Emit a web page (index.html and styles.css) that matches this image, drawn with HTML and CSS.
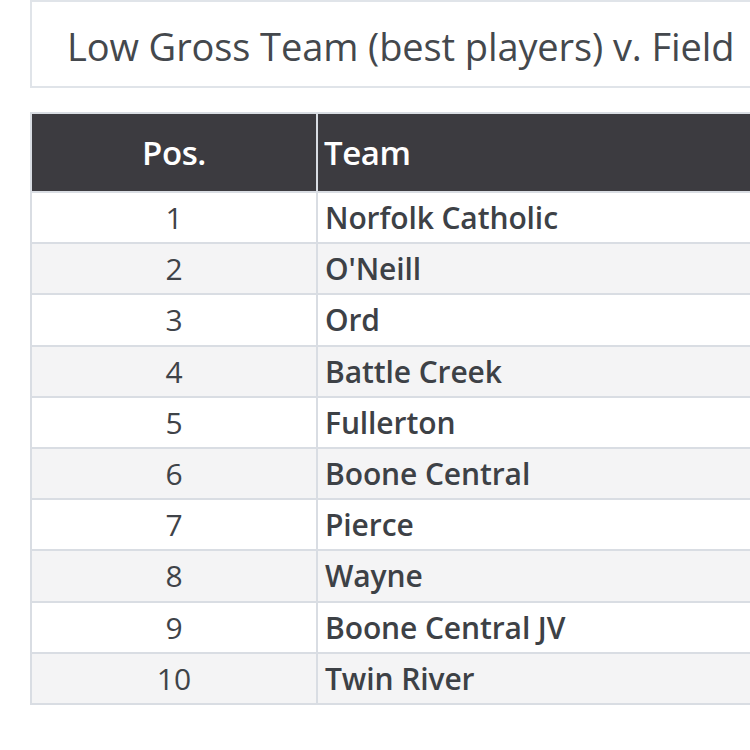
FILE: index.html
```html
<!DOCTYPE html>
<html lang="en">
<head>
<meta charset="utf-8">
<title>Low Gross Team</title>
<link rel="stylesheet" href="styles.css">
</head>
<body>
<div class="page">
  <div class="title-box">
    <h1 class="title">Low Gross Team (best players) v. Field</h1>
  </div>
  <table class="results">
    <thead>
      <tr><th class="pos">Pos.</th><th class="team">Team</th></tr>
    </thead>
    <tbody>
      <tr><td class="pos">1</td><td class="team">Norfolk Catholic</td></tr>
      <tr><td class="pos">2</td><td class="team">O'Neill</td></tr>
      <tr><td class="pos">3</td><td class="team">Ord</td></tr>
      <tr><td class="pos">4</td><td class="team">Battle Creek</td></tr>
      <tr><td class="pos">5</td><td class="team">Fullerton</td></tr>
      <tr><td class="pos">6</td><td class="team">Boone Central</td></tr>
      <tr><td class="pos">7</td><td class="team">Pierce</td></tr>
      <tr><td class="pos">8</td><td class="team">Wayne</td></tr>
      <tr><td class="pos">9</td><td class="team">Boone Central JV</td></tr>
      <tr><td class="pos">10</td><td class="team">Twin River</td></tr>
    </tbody>
  </table>
</div>
</body>
</html>
```
FILE: styles.css
```css
html, body {
  margin: 0;
  padding: 0;
  background: #ffffff;
  overflow: hidden;
}
.page {
  width: 900px;
  padding-left: 30px;
  font-family: "Open Sans", "Noto Sans", sans-serif;
  color: #3d4146;
}
.title-box {
  box-sizing: border-box;
  height: 88px;
  border: 2px solid #e0e4e9;
  display: flex;
  align-items: center;
  padding-left: 35px;
  padding-top: 4px;
}
.title {
  margin: 0;
  font-size: 38px;
  font-weight: 400;
  color: #44484d;
  white-space: nowrap;
  letter-spacing: -0.1px;
}
.results {
  margin-top: 24px;
  width: 870px;
  border-collapse: collapse;
  border: 2px solid #d9dde3;
}
.results th,
.results td {
  border: 2px solid #d9dde3;
  padding: 0;
  white-space: nowrap;
}
.results th {
  background: #3c3b40;
  color: #ffffff;
  height: 77px;
  font-size: 33px;
  font-weight: 600;
  letter-spacing: -0.4px;
}
.results th.pos { width: 284px; text-align: center; }
.results th.team { text-align: left; padding-left: 6px; }
.results td {
  height: 49.2px;
  font-size: 30px;
}
.results tbody tr:nth-child(even) td { background: #f4f4f5; }
.results td.pos { text-align: center; font-weight: 400; color: #3f4348; }
.results td.team { text-align: left; padding-left: 7px; font-weight: 600; letter-spacing: -0.1px; }
```
